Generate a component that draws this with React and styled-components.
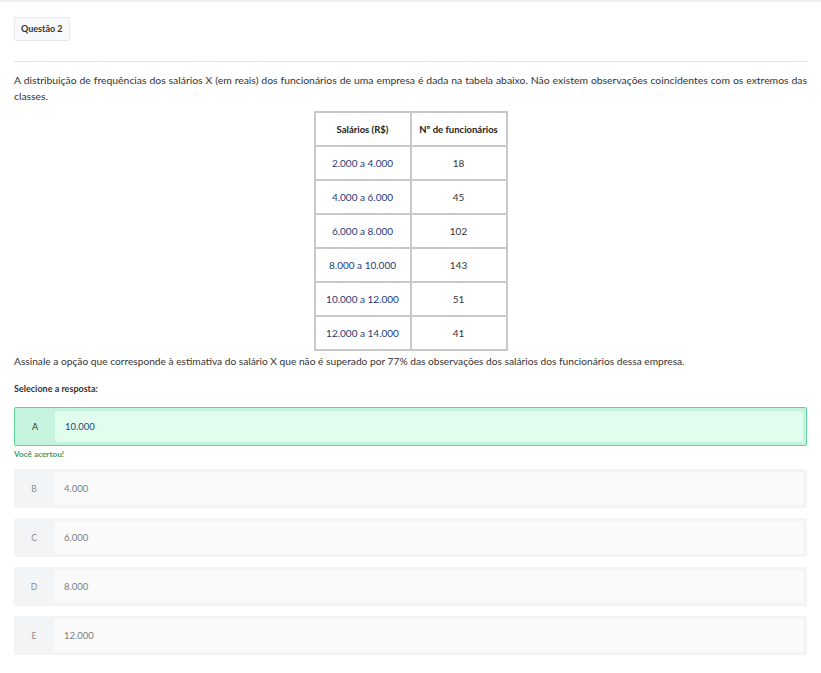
import React from "react"
import styled, { createGlobalStyle } from "styled-components"

const GlobalStyle = createGlobalStyle`
  body {
    margin: 0;
    background: #fff;
    font-family: Lato, "Open Sans", sans-serif;
    color: #333;
  }
`

const Page = styled.div`
  border-top: 2px solid #eceef0;
  padding: 14px 14px 20px;
`

const Badge = styled.div`
  display: inline-block;
  padding: 0 6px;
  height: 22px;
  line-height: 22px;
  border: 1px solid #e6e8ea;
  border-radius: 2px;
  background: #f8f9fa;
  font-size: 9px;
  font-weight: 700;
  color: #333;
`

const Divider = styled.hr`
  border: 0;
  border-top: 1px solid #e2e4e6;
  margin: 20px 0 0;
`

const Statement = styled.p`
  margin: 10px 0 0;
  font-size: 10.4px;
  line-height: 16px;
  text-align: justify;
  color: #333;
`

const Table = styled.table`
  margin: 7px auto 0;
  border-collapse: collapse;
  border-top: 1px solid #d8d8d8;
  border-left: 1px solid #d8d8d8;
  border-right: 1px solid #8a8a8a;
  border-bottom: 1px solid #8a8a8a;
`

const Th = styled.th`
  width: 94px;
  height: 32px;
  border: 2px solid #c9c9c9;
  font-size: 9.5px;
  font-weight: 700;
  color: #222;
  text-align: center;
  padding: 0;
`

const Td = styled.td`
  height: 32px;
  border: 2px solid #c9c9c9;
  font-size: 10px;
  color: ${(p) => (p.$range ? "#1f3a7a" : "#333")};
  text-align: center;
  padding: 0;
`

const Prompt = styled.p`
  margin: 4px 0 0;
  font-size: 10.2px;
  line-height: 13px;
`

const Label = styled.div`
  margin-top: 15px;
  font-size: 9px;
  font-weight: 700;
  color: #333;
`

const Options = styled.div`
  margin-top: 13px;
  display: flex;
  flex-direction: column;
`

const Option = styled.div`
  display: flex;
  height: 39px;
  box-sizing: border-box;
  border-radius: 2px;
  background: ${(p) => (p.$correct ? "#c6f3dd" : "#f2f4f5")};
  border: ${(p) => (p.$correct ? "1px solid #5fd49b" : "none")};
  padding: 3px 3px 3px 0;
  margin-bottom: ${(p) => (p.$correct ? "0" : "10px")};
`

const Letter = styled.div`
  width: 40px;
  flex: none;
  display: flex;
  align-items: center;
  justify-content: center;
  font-size: ${(p) => (p.$correct ? "9px" : "8.5px")};
  color: ${(p) => (p.$correct ? "#333" : "#8c8c8c")};
`

const Value = styled.div`
  flex: 1;
  display: flex;
  align-items: center;
  padding-left: 10px;
  border-radius: 2px;
  background: ${(p) => (p.$correct ? "#e0fdee" : "#fafafa")};
  font-size: 9.5px;
  color: ${(p) => (p.$correct ? "#1e4a7a" : "#7e7e7e")};
`

const Feedback = styled.div`
  margin: 3px 0 10px;
  font-size: 8.2px;
  font-weight: 700;
  color: #3f9c6d;
`

const rows = [
  ["2.000 a 4.000", "18"],
  ["4.000 a 6.000", "45"],
  ["6.000 a 8.000", "102"],
  ["8.000 a 10.000", "143"],
  ["10.000 a 12.000", "51"],
  ["12.000 a 14.000", "41"],
]

const answers = [
  ["A", "10.000", true],
  ["B", "4.000"],
  ["C", "6.000"],
  ["D", "8.000"],
  ["E", "12.000"],
]

export default function App() {
  return (
    <>
      <GlobalStyle />
      <Page>
        <Badge>Questão 2</Badge>
        <Divider />
        <Statement>
          A distribuição de frequências dos salários X (em reais) dos funcionários de uma empresa é dada na tabela abaixo. Não existem observações coincidentes com os extremos das classes.
        </Statement>
        <Table>
          <thead>
            <tr>
              <Th>Salários (R$)</Th>
              <Th>Nº de funcionários</Th>
            </tr>
          </thead>
          <tbody>
            {rows.map(([range, n]) => (
              <tr key={range}>
                <Td $range>{range}</Td>
                <Td>{n}</Td>
              </tr>
            ))}
          </tbody>
        </Table>
        <Prompt>
          Assinale a opção que corresponde à estimativa do salário X que não é superado por 77% das observações dos salários dos funcionários dessa empresa.
        </Prompt>
        <Label>Selecione a resposta:</Label>
        <Options>
          {answers.map(([letter, value, correct]) => (
            <React.Fragment key={letter}>
              <Option $correct={correct}>
                <Letter $correct={correct}>{letter}</Letter>
                <Value $correct={correct}>{value}</Value>
              </Option>
              {correct && <Feedback>Você acertou!</Feedback>}
            </React.Fragment>
          ))}
        </Options>
      </Page>
    </>
  )
}
